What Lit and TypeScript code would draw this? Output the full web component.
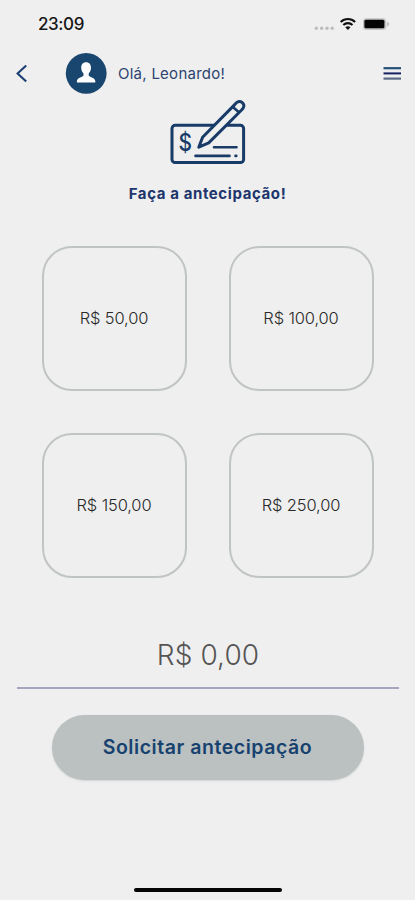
import { LitElement, html, css } from "lit";
import { customElement, property } from "lit/decorators.js";

@customElement("status-bar")
class StatusBar extends LitElement {
  static styles = css`
    :host { display: flex; height: 48px; box-sizing: border-box; padding-left: 38px; justify-content: space-between; }
    .time { font: 500 17px/49px Inter, sans-serif; letter-spacing: -0.4px; color: #171717; }
    svg { display: block; width: 110px; height: 48px; }
  `;
  render() {
    return html`
      <span class="time">23:09</span>
      <svg viewBox="305 0 110 48">
        <g fill="#bcbcbc">
          <circle cx="316.3" cy="28.3" r="1.7" /><circle cx="321.7" cy="28.3" r="1.7" />
          <circle cx="327" cy="28.3" r="1.7" /><circle cx="332.2" cy="28.3" r="1.7" />
        </g>
        <g fill="none" stroke="#111" stroke-width="2.1">
          <path d="M340.7 21.9a10.4 10.4 0 0 1 14.4 0" />
          <path d="M343.3 25a6.7 6.7 0 0 1 9.2 0" />
        </g>
        <path d="M345.3 27.2q2.6-2 5.2 0L347.9 30z" fill="#111" />
        <rect x="363" y="18.3" width="23.2" height="11.6" rx="3.2" fill="#c4c4c4" />
        <rect x="364.4" y="19.7" width="20" height="8.6" rx="1.5" fill="#050505" />
        <path d="M387.2 21.8q1.8.5 1.8 2.3t-1.8 2.3z" fill="#b5b5b5" />
      </svg>
    `;
  }
}

@customElement("user-header")
class UserHeader extends LitElement {
  @property() name = "";
  static styles = css`
    :host { display: flex; height: 50px; align-items: center; padding: 0 13px 0 15px; color: #1d3a69; }
    svg { display: block; flex: none; }
    .avatar { margin-left: 36px; }
    .greeting { flex: 1; margin-left: 11px; padding-top: 2px; font: 400 15px/20px Inter, sans-serif; letter-spacing: 0.26px; color: #2c446f; }
  `;
  render() {
    return html`
      <svg width="14" height="22" viewBox="15 62 14 22">
        <path d="M26.2 65.5 17.6 73.4l8.6 8.1" fill="none" stroke="#1c3f73" stroke-width="2.1" />
      </svg>
      <svg class="avatar" width="42" height="42" viewBox="0 0 42 42">
        <circle cx="21.2" cy="21.3" r="20.4" fill="#18466f" />
        <path fill="#fff" d="M21.100 10.300c3 0 4.900 2.200 4.900 5.300 0 2.600-.9 4.700-2.300 5.900v1.900c1.400 2.200 6.300 1.900 6.600 5.600v1.600H11.900V29c.3-3.700 5.200-3.400 6.600-5.600v-1.900c-1.400-1.200-2.300-3.300-2.300-5.900 0-3.100 1.900-5.300 4.900-5.300z" />
      </svg>
      <span class="greeting">Olá, ${this.name}!</span>
      <svg width="19" height="16" viewBox="383 65 19 16">
        <path d="M383.500 68.200h17.500" stroke="#245078" stroke-width="2.200" />
        <path d="M383.500 73.400h17.500" stroke="#171f62" stroke-width="2" />
        <path d="M383.500 78.600h17.500" stroke="#5b6b88" stroke-width="2.200" />
      </svg>
    `;
  }
}

@customElement("check-icon")
class CheckIcon extends LitElement {
  static styles = css`
    :host, svg { display: block; width: 80px; height: 68px; }
    text { font: 500 24px Inter, sans-serif; fill: #183b68; }
  `;
  render() {
    return html`
      <svg viewBox="168 98 80 68">
        <rect x="172" y="125.300" width="71.600" height="37.300" rx="3.200" fill="none" stroke="#183b68" stroke-width="3" />
        <text x="178.500" y="151" textLength="13.500" lengthAdjust="spacingAndGlyphs">$</text>
        <g stroke="#183b68" stroke-width="2.600" stroke-linecap="round">
          <path d="M214 147.200h22.500M195.500 155.900h34M235.500 155.900h.8" />
        </g>
        <g fill="#efefef" stroke="#183b68" stroke-width="3" stroke-linejoin="round">
          <path d="M198.800 147.200 202.600 137.200 234.700 104.600Q238.500 99.700 242.300 102.600 245.700 106 241.600 110L208.700 142.900z" />
          <path d="M232.600 106.800 239.200 112.400" fill="none" stroke-width="2.600" />
        </g>
      </svg>
    `;
  }
}

@customElement("app-root")
class AppRoot extends LitElement {
  private amounts = ["50,00", "100,00", "150,00", "250,00"];
  static styles = css`
    :host { display: flex; flex-direction: column; height: 900px; box-sizing: border-box; background: #efefef; font-family: Inter, sans-serif; }
    .intro { display: flex; flex-direction: column; align-items: center; }
    .title { margin: 18px 0 0; font-size: 15px; line-height: 20px; font-weight: 700; letter-spacing: 0.6px; color: #20356c; }
    .amounts { display: grid; grid-template-columns: 145px 145px; gap: 42px; justify-content: center; margin-top: 42px; }
    button { font-family: inherit; padding: 0; }
    .amount { width: 145px; height: 145px; box-sizing: border-box; border: 2px solid #c0c4c5; border-radius: 30px; background: transparent; font-size: 16.5px; padding-bottom: 1px; font-weight: 300; letter-spacing: -0.14px; color: #292929; }
    .total { height: 50px; margin: 52px 16px 0 17px; border-bottom: 2px solid #a3a6bd; padding-top: 7px; text-align: center; font-size: 28px; line-height: 36px; font-weight: 300; letter-spacing: 0.1px; color: #555; }
    .submit { align-self: center; width: 312px; height: 65px; margin-top: 26px; border: 0; border-radius: 33px; background: #bbc0c0; box-shadow: 0 1px 2px #d1d4d4; font-size: 19.5px; padding-bottom: 2px; font-weight: 600; letter-spacing: 0.55px; color: #17426f; }
    .home { width: 148px; height: 4px; border-radius: 2px; background: #050505; margin: auto auto 8px; }
  `;
  render() {
    return html`
      <status-bar></status-bar>
      <user-header name="Leonardo"></user-header>
      <section class="intro">
        <check-icon></check-icon>
        <h1 class="title">Faça a antecipação!</h1>
      </section>
      <section class="amounts">
        ${this.amounts.map((a) => html`<button class="amount">R$ ${a}</button>`)}
      </section>
      <div class="total">R$ 0,00</div>
      <button class="submit">Solicitar antecipação</button>
      <div class="home"></div>
    `;
  }
}
